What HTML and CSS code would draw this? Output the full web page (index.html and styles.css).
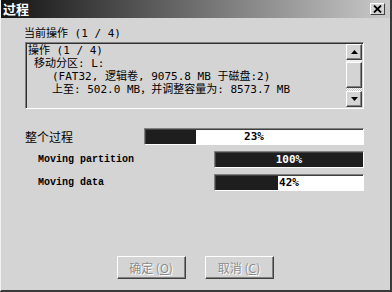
FILE: index.html
```html
<!DOCTYPE html>
<html lang="zh-CN">
<head>
  <meta charset="UTF-8" />
  <title>过程</title>
  <link rel="stylesheet" href="styles.css">
</head>
<body>
  <div class="window">
    <div class="titlebar">
      <span class="title">过程</span>
      <span class="close">
        <svg width="9" height="8" viewBox="0 0 9 8"><path d="M1 0.5 L8 7.5 M8 0.5 L1 7.5" stroke="#000" stroke-width="1.8"/></svg>
      </span>
    </div>

    <div class="content">
      <div class="label">当前操作 (1 / 4)</div>
      <div class="listbox">
        <div class="lines">
          <div>操作 (1 / 4)</div>
          <div class="indent1">移动分区: L:</div>
          <div class="indent2">(FAT32, 逻辑卷, 9075.8 MB 于磁盘:2)</div>
          <div class="indent2">上至: 502.0 MB，并调整容量为: 8573.7 MB</div>
        </div>
        <div class="scrollbar">
          <div class="sb-btn">
            <svg width="7" height="4" viewBox="0 0 7 4"><path d="M3.5 0 L7 4 L0 4 Z" fill="#000"/></svg>
          </div>
          <div class="sb-gap"></div>
          <div class="sb-thumb"></div>
          <div class="sb-track"></div>
          <div class="sb-btn">
            <svg width="7" height="4" viewBox="0 0 7 4"><path d="M0 0 L7 0 L3.5 4 Z" fill="#000"/></svg>
          </div>
        </div>
      </div>

      <div class="progress">
        <div class="row">
          <span class="row-label main">整个过程</span>
          <div class="bar wide">
            <div class="fill" style="width: 23%"></div>
            <span class="pct">23%</span>
          </div>
        </div>
        <div class="row">
          <span class="row-label step">Moving partition</span>
          <div class="bar">
            <div class="fill" style="width: 100%"></div>
            <span class="pct on-dark">100%</span>
          </div>
        </div>
        <div class="row">
          <span class="row-label step">Moving data</span>
          <div class="bar">
            <div class="fill" style="width: 42%"></div>
            <span class="pct">42%</span>
          </div>
        </div>
      </div>
    </div>

    <div class="buttons">
      <button class="btn" disabled>确定 (<u>O</u>)</button>
      <button class="btn" disabled>取消 (<u>C</u>)</button>
    </div>
  </div>
</body>
</html>
```

FILE: styles.css
```css
body {
  margin: 0;
  background: #d4d4d4;
  font-family: "DejaVu Sans Mono", "Noto Sans CJK SC", monospace;
  font-size: 11px;
  color: #000;
}
.window {
  width: 392px;
  height: 292px;
  box-sizing: border-box;
  background: #d4d4d4;
  border-left: 1px solid #f2f2f2;
  border-right: 2px solid #3a3a3a;
  border-bottom: 2px solid #3a3a3a;
  display: flex;
  flex-direction: column;
}
.titlebar {
  height: 18px;
  display: flex;
  align-items: center;
  justify-content: space-between;
  padding: 0 5px 0 2px;
  background: linear-gradient(to right, #141414, #4a4a4a 30%, #cacaca);
}
.title {
  color: #fff;
  font: bold 13px "Noto Sans CJK SC", sans-serif;
  line-height: 18px;
}
.close {
  width: 15px;
  height: 12px;
  box-sizing: border-box;
  background: #d4d4d4;
  border: 1px solid;
  border-color: #fff #404040 #404040 #fff;
  display: flex;
  align-items: center;
  justify-content: center;
}

.content { padding: 10px 0 0 23px; }
.label {
  line-height: 12px;
  height: 12px;
}
.listbox {
  margin: 2px 0 0 1px;
  width: 339px;
  height: 67px;
  box-sizing: border-box;
  display: flex;
  border: 1px solid;
  border-color: #808080 #fff #fff #808080;
  box-shadow: inset 1px 1px #303030, inset -1px -1px #d4d4d4;
  padding: 1px;
}
.lines {
  flex: 1;
  padding-left: 1px;
  line-height: 13px;
  white-space: nowrap;
}
.indent1 { padding-left: 6px; }
.indent2 { padding-left: 24px; }

.scrollbar {
  width: 16px;
  display: flex;
  flex-direction: column;
}
.sb-btn, .sb-thumb {
  box-sizing: border-box;
  background: #d4d4d4;
  border: 1px solid;
  border-color: #fff #404040 #404040 #fff;
  box-shadow: inset -1px -1px #808080;
}
.sb-btn {
  height: 16px;
  display: flex;
  align-items: center;
  justify-content: center;
}
.sb-gap { height: 2px; background: #f0f0f0; }
.sb-thumb { height: 26px; }
.sb-track {
  flex: 1;
  background: repeating-conic-gradient(#fff 0 25%, #c4c4c4 0 50%) 0 0 / 2px 2px;
}

.progress { margin-top: 19px; width: 340px; }
.row {
  display: flex;
  align-items: center;
  justify-content: space-between;
  height: 17px;
  margin-bottom: 6px;
}
.row-label.main {
  font: 12px "Noto Sans CJK SC", sans-serif;
  padding-left: 1px;
}
.row-label.step {
  font: bold 10px "Liberation Mono", monospace;
  padding-left: 14px;
}
.bar {
  position: relative;
  width: 150px;
  height: 17px;
  box-sizing: border-box;
  background: #fff;
  border: 1px solid;
  border-color: #808080 #fff #fff #808080;
  box-shadow: inset 1px 1px #404040;
  padding: 1px 0 0 1px;
}
.bar.wide { width: 220px; }
.fill {
  height: 100%;
  background: #1e1e1e;
}
.pct {
  position: absolute;
  inset: 0;
  text-align: center;
  line-height: 15px;
  font: bold 11px "DejaVu Sans Mono", monospace;
  line-height: 15px;
}
.pct.on-dark { color: #fff; }

.buttons {
  margin-top: auto;
  display: flex;
  justify-content: center;
  gap: 19px;
  padding: 0 1px 11px 0;
}
.btn {
  width: 69px;
  height: 23px;
  box-sizing: border-box;
  background: #d4d4d4;
  border: 1px solid;
  border-color: #fff #404040 #404040 #fff;
  box-shadow: inset -1px -1px #808080;
  font: 12px "Noto Sans CJK SC", sans-serif;
  color: #8c8c8c;
  text-shadow: 1px 1px #fff;
  padding: 0;
}
```
